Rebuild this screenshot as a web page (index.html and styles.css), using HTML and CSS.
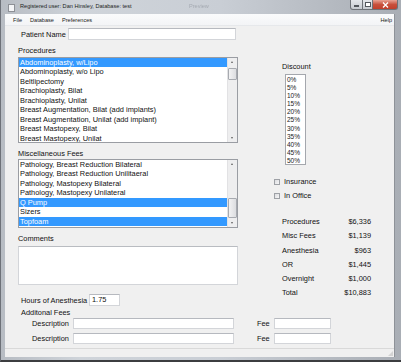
FILE: index.html
```html
<!DOCTYPE html>
<html>
<head>
<meta charset="utf-8">
<link rel="stylesheet" href="styles.css">
</head>
<body>
<div class="window">
  <div class="titlebar">
    <div class="app-icon"></div>
    <div class="title">Registered user: Dan Hinsley, Database: test</div>
    <div class="ghost">Preview</div>
    <div class="caption-buttons">
      <div class="cb cb-min"><span class="min-bar"></span></div>
      <div class="cb cb-max"><span class="max-box"></span></div>
      <div class="cb cb-close">
        <svg width="7" height="6" viewBox="0 0 7 6"><path d="M1 0.5 L6 5.5 M6 0.5 L1 5.5" stroke="#fff" stroke-width="1.3"/></svg>
      </div>
    </div>
  </div>
  <div class="client">
    <div class="menubar">
      <span class="menu">File</span>
      <span class="menu">Database</span>
      <span class="menu">Preferences</span>
      <span class="menu menu-help">Help</span>
    </div>
    <div class="main">
      <div class="left">
        <div class="field-row patient">
          <span class="lbl lbl-patient">Patient Name</span>
          <div class="input input-patient"></div>
        </div>
        <div class="group-label lbl-proc">Procedures</div>
        <div class="listbox list-proc">
          <div class="items">
            <div class="item selected">Abdominoplasty, w/Lipo</div>
            <div class="item">Abdominoplasty, w/o Lipo</div>
            <div class="item">Beltlipectomy</div>
            <div class="item">Brachioplasty, Bilat</div>
            <div class="item">Brachioplasty, Unilat</div>
            <div class="item">Breast Augmentation, Bilat (add implants)</div>
            <div class="item">Breast Augmentation, Unilat (add implant)</div>
            <div class="item">Breast Mastopexy, Bilat</div>
            <div class="item">Breast Mastopexy, Unilat</div>
          </div>
          <div class="scrollbar">
            <div class="arrow up"></div>
            <div class="track"><div class="thumb thumb-proc"></div></div>
            <div class="arrow down"></div>
          </div>
        </div>
        <div class="group-label lbl-misc">Miscellaneous Fees</div>
        <div class="listbox list-misc">
          <div class="items">
            <div class="item">Pathology, Breast Reduction Bilateral</div>
            <div class="item">Pathology, Breast Reduction Unilitaeral</div>
            <div class="item">Pathology, Mastopexy Bilateral</div>
            <div class="item">Pathology, Mastopexy Unilateral</div>
            <div class="item selected">Q Pump</div>
            <div class="item">Sizers</div>
            <div class="item selected">Topfoam</div>
          </div>
          <div class="scrollbar">
            <div class="arrow up"></div>
            <div class="track"><div class="thumb thumb-misc"></div></div>
            <div class="arrow down"></div>
          </div>
        </div>
        <div class="group-label lbl-comments">Comments</div>
        <div class="textarea"></div>
        <div class="field-row hours">
          <span class="lbl lbl-hours">Hours of Anesthesia</span>
          <div class="input input-hours">1.75</div>
        </div>
      </div>
      <div class="right">
        <div class="group-label lbl-discount">Discount</div>
        <div class="discount-list">
          <div class="ditem">0%</div>
          <div class="ditem">5%</div>
          <div class="ditem">10%</div>
          <div class="ditem">15%</div>
          <div class="ditem">20%</div>
          <div class="ditem">25%</div>
          <div class="ditem">30%</div>
          <div class="ditem">35%</div>
          <div class="ditem">40%</div>
          <div class="ditem">45%</div>
          <div class="ditem">50%</div>
        </div>
        <div class="check-row check-first"><span class="checkbox"></span><span class="check-text">Insurance</span></div>
        <div class="check-row check-second"><span class="checkbox"></span><span class="check-text">In Office</span></div>
        <div class="summary">
          <div class="sum-row"><span>Procedures</span><span>$6,336</span></div>
          <div class="sum-row"><span>Misc Fees</span><span>$1,139</span></div>
          <div class="sum-row"><span>Anesthesia</span><span>$963</span></div>
          <div class="sum-row"><span>OR</span><span>$1,445</span></div>
          <div class="sum-row"><span>Overnight</span><span>$1,000</span></div>
          <div class="sum-row"><span>Total</span><span>$10,883</span></div>
        </div>
      </div>
    </div>
    <div class="extra">
      <div class="group-label lbl-additional">Additonal Fees</div>
      <div class="fee-row fee-first">
        <span class="lbl lbl-desc">Description</span>
        <div class="input input-desc"></div>
        <span class="lbl lbl-fee">Fee</span>
        <div class="input input-fee"></div>
      </div>
      <div class="fee-row fee-second">
        <span class="lbl lbl-desc">Description</span>
        <div class="input input-desc"></div>
        <span class="lbl lbl-fee">Fee</span>
        <div class="input input-fee"></div>
      </div>
    </div>
    <div class="statusbar"><div class="grip"></div></div>
  </div>
</div>
</body>
</html>
```

FILE: styles.css
```css
html, body {
  margin: 0;
  padding: 0;
  width: 401px;
  height: 362px;
  overflow: hidden;
  background: #3a3a3e;
}

.window {
  box-sizing: border-box;
  width: 401px;
  height: 362px;
  display: flex;
  flex-direction: column;
  padding: 0 6px 3px 4px;
  background: linear-gradient(90deg, #b7bcc3 0%, #cfd4da 20%, #c9ced5 55%, #b3b8bf 85%, #a9aeb5 100%);
  border-left: 1px solid #6d7178;
  border-bottom: 2px solid #3c3d40;
  font-family: "Liberation Sans", Arial, sans-serif;
  color: #111;
}

.titlebar {
  height: 14px;
  display: flex;
  align-items: flex-start;
  position: relative;
  margin-left: -1px;
}

.app-icon {
  width: 5px;
  height: 6px;
  margin: 4px 0 0 4px;
  background: #f4f5f7;
  border: 1px solid #8d9096;
}

.title {
  margin: 3px 0 0 5px;
  font-size: 5.6px;
  line-height: 7px;
  color: #1d1f24;
  white-space: nowrap;
}

.ghost {
  position: absolute;
  left: 185px;
  top: 3px;
  font-size: 5.6px;
  color: #8b9099;
  opacity: 0.6;
  filter: blur(0.6px);
}

.caption-buttons {
  margin-left: auto;
  margin-right: -3px;
  display: flex;
  height: 10px;
}

.cb {
  height: 10px;
  display: flex;
  align-items: center;
  justify-content: center;
  box-sizing: border-box;
  border: 1px solid #6e7278;
  border-top: none;
}

.cb-min {
  width: 13px;
  border-radius: 0 0 0 3px;
  background: linear-gradient(#e3e6ea, #c6cad0);
}

.cb-max {
  width: 10px;
  border-left: none;
  background: linear-gradient(#e3e6ea, #c6cad0);
}

.cb-close {
  width: 25px;
  border-left: none;
  border-radius: 0 0 3px 0;
  background: linear-gradient(#e9a394, #c8503c 50%, #c13f2c);
}

.min-bar {
  width: 5px;
  height: 2px;
  margin-top: 3px;
  background: #fff;
  border: 1px solid #52565c;
  box-sizing: border-box;
}

.max-box {
  width: 6px;
  height: 5px;
  border: 1px solid #52565c;
  background: #fff;
  box-sizing: border-box;
}

.client {
  flex: 1;
  display: flex;
  flex-direction: column;
  background: #f0f0f0;
  border-right: 1px solid #8e9298;
}

.menubar {
  height: 12px;
  display: flex;
  align-items: center;
  padding-left: 4px;
  background: linear-gradient(#fafbfc, #f3f4f6);
  border-bottom: 1px solid #e6e8eb;
  box-sizing: border-box;
}

.menu {
  font-size: 5.6px;
  padding: 0 4px;
  color: #1a1a1a;
}

.menu-help {
  margin-left: auto;
  padding-right: 2px;
}

.main {
  display: flex;
  height: 280px;
}

.left {
  margin-left: 13px;
  width: 220px;
  display: flex;
  flex-direction: column;
}

.lbl, .group-label, .item, .check-text, .sum-row {
  font-size: 7.4px;
  line-height: 9px;
  white-space: nowrap;
}

.field-row {
  display: flex;
  align-items: center;
}

.patient {
  margin-top: 2px;
  height: 12px;
}

.lbl-patient {
  margin-left: 3px;
  width: 47px;
}

.input {
  box-sizing: border-box;
  background: #fff;
  border: 1px solid #d3d5d9;
  border-top-color: #b6b9bf;
  font-size: 7.4px;
  line-height: 9px;
  padding-left: 3px;
}

.input-patient {
  width: 168px;
  height: 12px;
}

.group-label {
  height: 9px;
}

.lbl-proc { margin-top: 6px; }
.lbl-misc { margin-top: 6px; }
.lbl-comments { margin-top: 6px; }

.listbox {
  box-sizing: border-box;
  background: #fff;
  border: 1px solid #9a9da3;
  display: flex;
  overflow: hidden;
}

.list-proc {
  margin-top: 2px;
  height: 86px;
}

.list-misc {
  margin-top: 1px;
  height: 69px;
}

.items {
  flex: 1;
  overflow: hidden;
}

.item {
  height: 9.45px;
  line-height: 9.45px;
  padding-left: 1px;
  color: #111;
}

.item.selected {
  background: #3399ff;
  color: #fff;
}

.scrollbar {
  width: 9px;
  display: flex;
  flex-direction: column;
  background: #eeeeef;
  border-left: 1px solid #e2e2e4;
}

.arrow {
  height: 8px;
  position: relative;
}

.arrow::after {
  content: "";
  position: absolute;
  left: 3px;
  top: 3px;
  border-left: 1.5px solid transparent;
  border-right: 1.5px solid transparent;
}

.arrow.up::after {
  border-bottom: 2px solid #606060;
}

.arrow.down::after {
  border-top: 2px solid #606060;
}

.track {
  flex: 1;
  position: relative;
}

.thumb {
  position: absolute;
  left: 0;
  right: 0;
  box-sizing: border-box;
  border: 1px solid #a7aab0;
  border-radius: 1px;
  background: linear-gradient(90deg, #f2f2f3, #dcdde0);
}

.thumb-proc {
  top: 2px;
  height: 12px;
}

.thumb-misc {
  top: 30px;
  height: 20px;
}

.textarea {
  margin-top: 3px;
  height: 39px;
  box-sizing: border-box;
  background: #fff;
  border: 1px solid #d3d5d9;
  border-top-color: #b9bcc1;
}

.hours {
  margin-top: 9px;
  height: 12px;
}

.lbl-hours {
  margin-left: 3px;
  width: 68px;
}

.input-hours {
  width: 31px;
  height: 12px;
  padding-left: 2px;
}

.right {
  flex: 1;
  display: flex;
  flex-direction: column;
}

.lbl-discount {
  margin-top: 36px;
  margin-left: 44px;
}

.discount-list {
  margin-top: 3px;
  margin-left: 47px;
  width: 21px;
  height: 91px;
  box-sizing: border-box;
  border: 1px solid #a4a7ad;
  background: #fff;
  padding-top: 1px;
}

.ditem {
  font-size: 6.5px;
  line-height: 8.1px;
  height: 8.1px;
  padding-left: 1px;
  color: #222;
}

.check-row {
  display: flex;
  align-items: center;
  height: 9px;
  margin-left: 36px;
}

.check-first { margin-top: 12px; }
.check-second { margin-top: 5px; }

.checkbox {
  width: 6px;
  height: 6px;
  box-sizing: border-box;
  border: 1px solid #9ea1a6;
  background: linear-gradient(135deg, #dcdde0, #f6f6f7);
}

.check-text {
  margin-left: 4px;
}

.summary {
  margin-top: 15px;
  margin-left: 44px;
  width: 89px;
}

.sum-row {
  height: 14.3px;
  line-height: 14.3px;
  display: flex;
  justify-content: space-between;
}

.extra {
  margin-left: 13px;
  display: flex;
  flex-direction: column;
}

.lbl-additional {
  margin-top: 2px;
  margin-left: 3px;
}

.fee-row {
  display: flex;
  align-items: center;
  height: 11px;
}

.fee-first { margin-top: 1px; }
.fee-second { margin-top: 4px; }

.lbl-desc {
  margin-left: 14px;
  width: 41px;
}

.input-desc {
  width: 161px;
  height: 11px;
}

.lbl-fee {
  margin-left: 23px;
  width: 17px;
}

.input-fee {
  width: 57px;
  height: 11px;
}

.statusbar {
  margin-top: auto;
  height: 8px;
  border-top: 1px solid #d9d9d9;
  position: relative;
}

.grip {
  position: absolute;
  right: 1px;
  bottom: 1px;
  width: 5px;
  height: 5px;
  background: radial-gradient(circle, #b0b0b0 0.6px, transparent 0.8px) 0 0 / 2px 2px;
  clip-path: polygon(100% 0, 100% 100%, 0 100%);
}
```
